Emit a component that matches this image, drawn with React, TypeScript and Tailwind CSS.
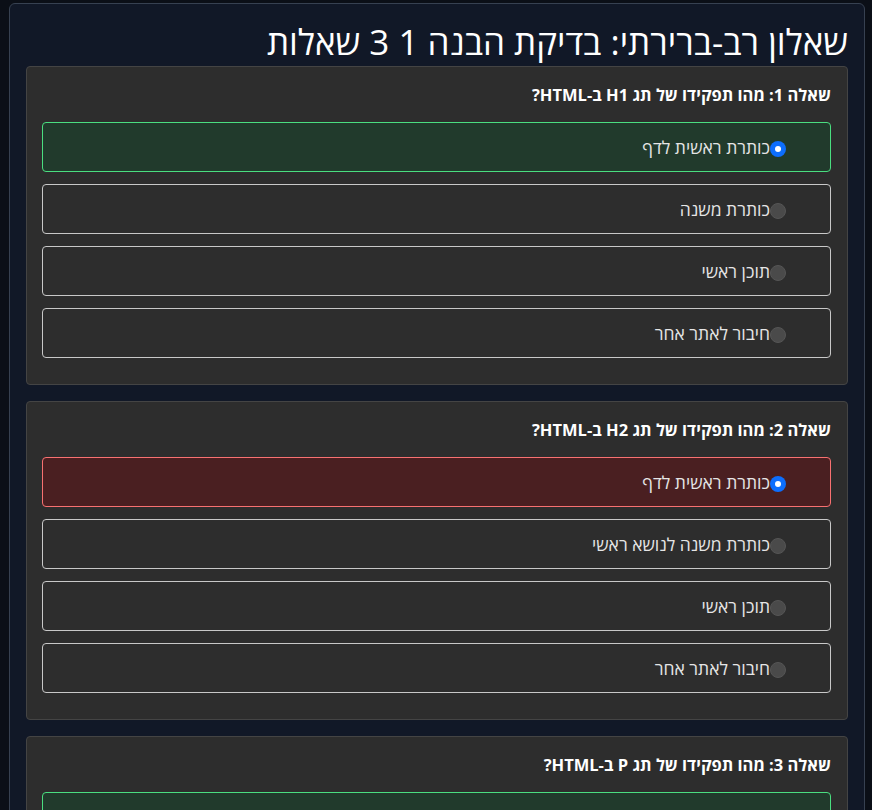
import React from 'react';

type Option = { text: string; state?: 'correct' | 'wrong' };
type Question = { title: string; options: Option[] };

const QUESTIONS: Question[] = [
  {
    title: 'שאלה 1: מהו תפקידו של תג H1 ב-HTML?',
    options: [
      { text: 'כותרת ראשית לדף', state: 'correct' },
      { text: 'כותרת משנה' },
      { text: 'תוכן ראשי' },
      { text: 'חיבור לאתר אחר' },
    ],
  },
  {
    title: 'שאלה 2: מהו תפקידו של תג H2 ב-HTML?',
    options: [
      { text: 'כותרת ראשית לדף', state: 'wrong' },
      { text: 'כותרת משנה לנושא ראשי' },
      { text: 'תוכן ראשי' },
      { text: 'חיבור לאתר אחר' },
    ],
  },
  {
    title: 'שאלה 3: מהו תפקידו של תג P ב-HTML?',
    options: [
      { text: 'טקסט רגיל', state: 'correct' },
      { text: 'כותרת משנה' },
      { text: 'תמונה' },
      { text: 'חיבור לאתר אחר' },
    ],
  },
];

function Radio({ checked }: { checked: boolean }) {
  return checked ? (
    <span className="w-4 h-4 rounded-full bg-[#0d6efd] flex items-center justify-center shrink-0 mt-[4px]">
      <span className="w-[6px] h-[6px] rounded-full bg-white" />
    </span>
  ) : (
    <span className="w-4 h-4 rounded-full bg-[#4a4a4a] border border-[#555] shrink-0 mt-[4px]" />
  );
}

function OptionRow({ option }: { option: Option }) {
  const cls =
    option.state === 'correct'
      ? 'border-[#4ade80] bg-[#213a2c]'
      : option.state === 'wrong'
        ? 'border-[#f87171] bg-[#4a1f21]'
        : 'border-[#c8c8c8] bg-transparent';
  return (
    <label className={`flex items-center h-[50px] pr-[44px] border rounded-[4px] ${cls}`}>
      <Radio checked={!!option.state} />
      <span className="text-[17.5px] leading-[24px] text-[#e5e5e5]">{option.text}</span>
    </label>
  );
}

export default function App() {
  return (
    <div
      dir="rtl"
      className="min-h-screen bg-[#0b0f17] pl-[9px] pr-[7px] pt-[3px]"
      style={{ fontFamily: '"Open Sans", "Noto Sans", sans-serif' }}
    >
      <div className="bg-[#111827] border border-[#374151] rounded-[6px] px-4 pb-4">
        <h1 className="text-[35px] leading-[44px] text-white mt-[16px] mb-[2px]">
          שאלון רב-ברירתי: בדיקת הבנה 1 3 שאלות
        </h1>
        <div className="flex flex-col gap-4">
          {QUESTIONS.map((q) => (
            <div key={q.title} className="bg-[#2d2d2d] border border-[#444] rounded-[4px] pl-[15px] pr-[16px] pt-[18px] pb-[26px]">
              <h3 className="text-[16.5px] font-bold text-white leading-[20px] mb-[17px]">{q.title}</h3>
              <div className="flex flex-col gap-3">
                {q.options.map((o) => (
                  <OptionRow key={o.text} option={o} />
                ))}
              </div>
            </div>
          ))}
        </div>
      </div>
    </div>
  );
}
